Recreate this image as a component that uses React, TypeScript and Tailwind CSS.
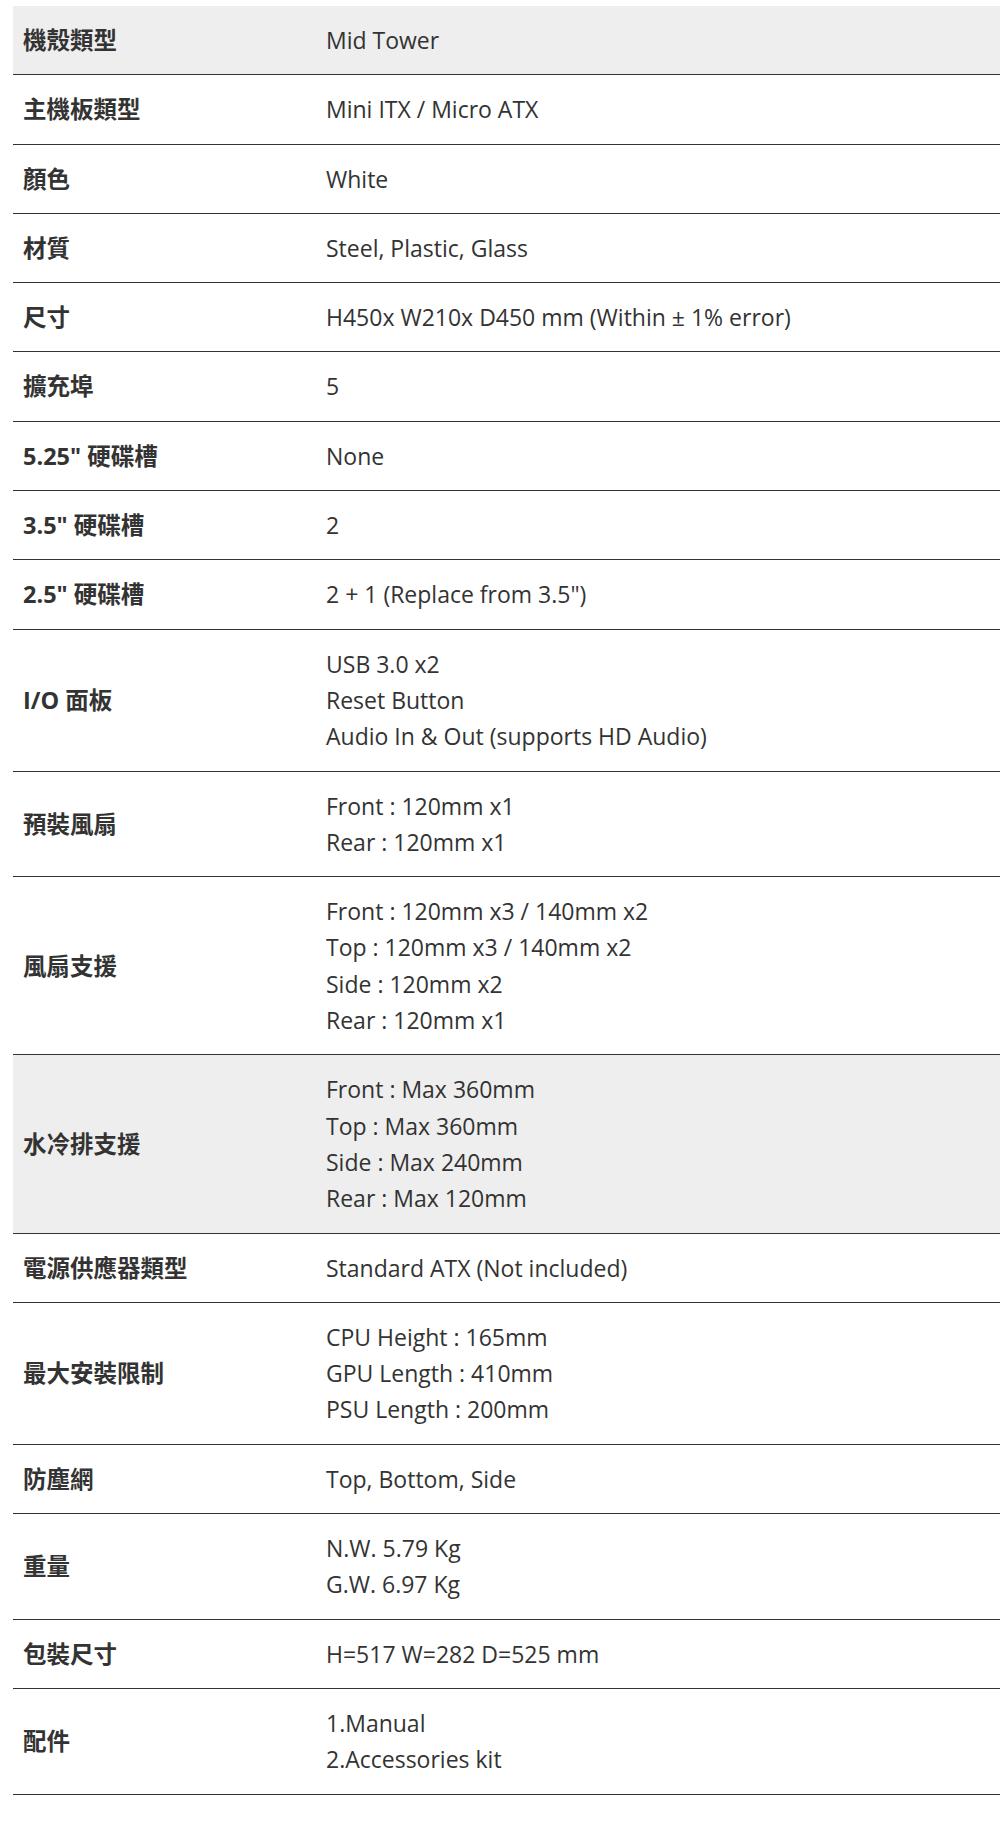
import React from "react";

type Row = { label: string; values: string[]; gray?: boolean };

const rows: Row[] = [
  { label: "機殼類型", values: ["Mid Tower"], gray: true },
  { label: "主機板類型", values: ["Mini ITX / Micro ATX"] },
  { label: "顏色", values: ["White"] },
  { label: "材質", values: ["Steel, Plastic, Glass"] },
  { label: "尺寸", values: ["H450x W210x D450 mm (Within ± 1% error)"] },
  { label: "擴充埠", values: ["5"] },
  { label: "5.25\" 硬碟槽", values: ["None"] },
  { label: "3.5\" 硬碟槽", values: ["2"] },
  { label: "2.5\" 硬碟槽", values: ["2 + 1 (Replace from 3.5\")"] },
  { label: "I/O 面板", values: ["USB 3.0 x2", "Reset Button", "Audio In & Out (supports HD Audio)"] },
  { label: "預裝風扇", values: ["Front : 120mm x1", "Rear : 120mm x1"] },
  {
    label: "風扇支援",
    values: ["Front : 120mm x3 / 140mm x2", "Top : 120mm x3 / 140mm x2", "Side : 120mm x2", "Rear : 120mm x1"],
  },
  {
    label: "水冷排支援",
    values: ["Front : Max 360mm", "Top : Max 360mm", "Side : Max 240mm", "Rear : Max 120mm"],
    gray: true,
  },
  { label: "電源供應器類型", values: ["Standard ATX (Not included)"] },
  { label: "最大安裝限制", values: ["CPU Height : 165mm", "GPU Length : 410mm", "PSU Length : 200mm"] },
  { label: "防塵網", values: ["Top, Bottom, Side"] },
  { label: "重量", values: ["N.W. 5.79 Kg", "G.W. 6.97 Kg"] },
  { label: "包裝尺寸", values: ["H=517 W=282 D=525 mm"] },
  { label: "配件", values: ["1.Manual", "2.Accessories kit"] },
];

export default function App() {
  return (
    <div className="bg-white w-[1000px] min-h-[1821px] pt-[6px] pl-[13px]">
      <div className="flex flex-col">
        {rows.map((r, i) => (
          <div
            key={i}
            className={`flex items-center border-b border-[#333333] py-[16px] ${
              r.gray ? "bg-[#eeeeee]" : "bg-white"
            }`}
          >
            <div
              className="w-[313px] shrink-0 pl-[10px] text-[23.5px] font-bold text-[#333333] leading-[36.3px]"
              style={{ fontFamily: '"Open Sans", "Noto Sans CJK TC", sans-serif' }}
            >
              {r.label}
            </div>
            <div
              className="flex-1 flex flex-col text-[23px] text-[#333333] leading-[36.3px]"
              style={{ fontFamily: '"Open Sans", "Noto Sans CJK TC", sans-serif' }}
            >
              {r.values.map((v, j) => (
                <div key={j}>{v}</div>
              ))}
            </div>
          </div>
        ))}
      </div>
    </div>
  );
}
